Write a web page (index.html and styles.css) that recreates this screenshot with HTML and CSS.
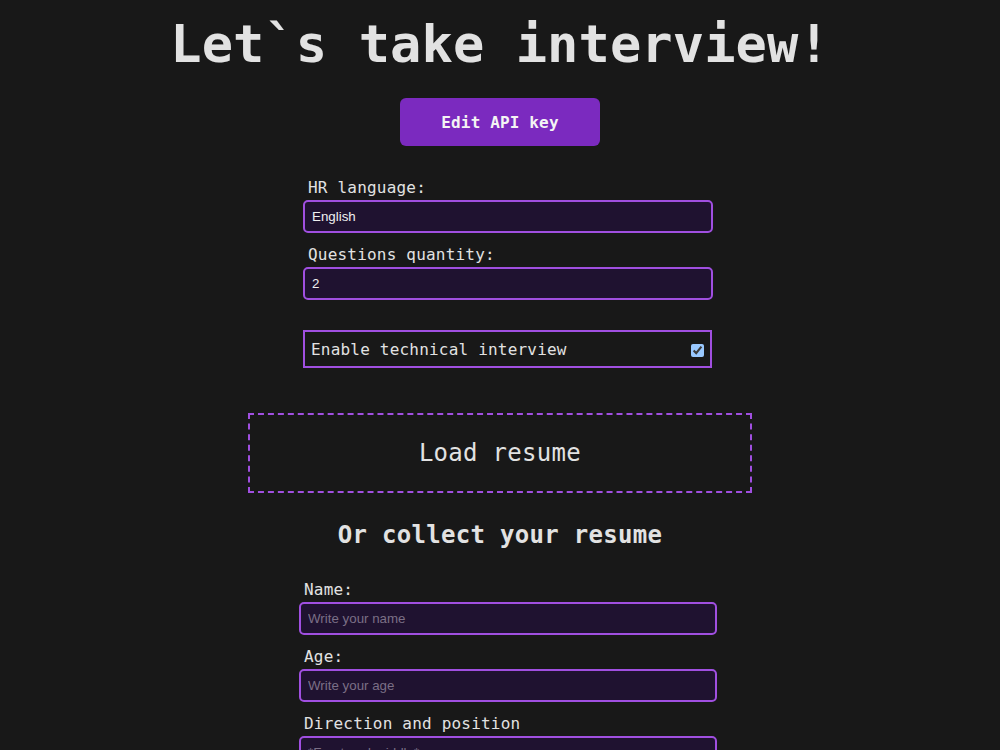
FILE: index.html
```html
<!DOCTYPE html>
<html lang="en">
  <head>
    <meta charset="UTF-8" />
    <meta name="viewport" content="width=device-width, initial-scale=1.0" />
    <title>Interview</title>
    <link rel="stylesheet" href="styles.css">
  </head>
  <body>
    <main class="page">
      <h1 class="title">Let`s take interview!</h1>
      <button class="api-btn">Edit API key</button>

      <div class="settings">
        <label class="field-label" for="hr_lang">HR language:</label>
        <input class="field" type="text" id="hr_lang" value="English" />
        <label class="field-label" for="q_count">Questions quantity:</label>
        <input class="field" type="text" id="q_count" value="2" />
        <label class="toggle-row">
          <span>Enable technical interview</span>
          <input type="checkbox" class="toggle" checked />
        </label>
      </div>

      <div class="dropzone">Load resume</div>

      <h2 class="subtitle">Or collect your resume</h2>

      <div class="resume">
        <label class="field-label" for="name">Name:</label>
        <input class="field" type="text" id="name" placeholder="Write your name" />
        <label class="field-label" for="age">Age:</label>
        <input class="field" type="text" id="age" placeholder="Write your age" />
        <label class="field-label" for="position">Direction and position</label>
        <input class="field" type="text" id="position" placeholder="*Front-end middle*" />
      </div>
    </main>
  </body>
</html>
```

FILE: styles.css
```css
* {
  margin: 0;
  padding: 0;
  box-sizing: border-box;
}
body {
  background: #181818;
  color: #e2e2e2;
  font-family: "DejaVu Sans Mono", "Liberation Mono", monospace;
  overflow: hidden;
}
.page {
  display: flex;
  flex-direction: column;
  align-items: center;
}
.title {
  font-size: 52px;
  line-height: 60px;
  font-weight: 700;
  margin-top: 14px;
  letter-spacing: 0.1px;
}
.api-btn {
  margin-top: 24px;
  width: 200px;
  height: 48px;
  border: none;
  border-radius: 6px;
  background: #7b2abf;
  color: #f4f4f4;
  font-family: inherit;
  font-size: 16px;
  font-weight: 700;
  letter-spacing: 0.15px;
  cursor: pointer;
}
.settings,
.resume {
  display: flex;
  flex-direction: column;
  padding-left: 16px;
}
.settings {
  width: 426px;
  margin-top: 32px;
}
.resume {
  width: 434px;
  margin-top: 31px;
}
.field-label {
  font-size: 16px;
  line-height: 19px;
  letter-spacing: 0.2px;
  padding-left: 5px;
  margin-bottom: 3px;
}
.field {
  height: 33px;
  border: 2px solid #a04fe0;
  border-radius: 5px;
  background: #1f1230;
  color: #f0f0f0;
  padding: 0 7px;
  font-family: "Liberation Sans", Arial, sans-serif;
  font-size: 13.33px;
  outline: none;
  margin-bottom: 12px;
}
.field::placeholder {
  color: #7b6f86;
}
.toggle-row {
  margin-top: 18px;
  width: 409px;
  height: 38px;
  border: 2px solid #a04fe0;
  display: flex;
  align-items: center;
  justify-content: space-between;
  padding: 0 6px;
  font-size: 16px;
  letter-spacing: 0.2px;
}
.toggle {
  color-scheme: dark;
  width: 13px;
  height: 13px;
  margin-top: 2px;
}
.dropzone {
  margin-top: 45px;
  width: 504px;
  height: 80px;
  border: 2px dashed #a04fe0;
  display: flex;
  align-items: center;
  justify-content: center;
  font-size: 24px;
  letter-spacing: 0.3px;
}
.subtitle {
  margin-top: 28px;
  font-size: 24px;
  line-height: 28px;
  font-weight: 700;
  letter-spacing: 0.3px;
}
```
